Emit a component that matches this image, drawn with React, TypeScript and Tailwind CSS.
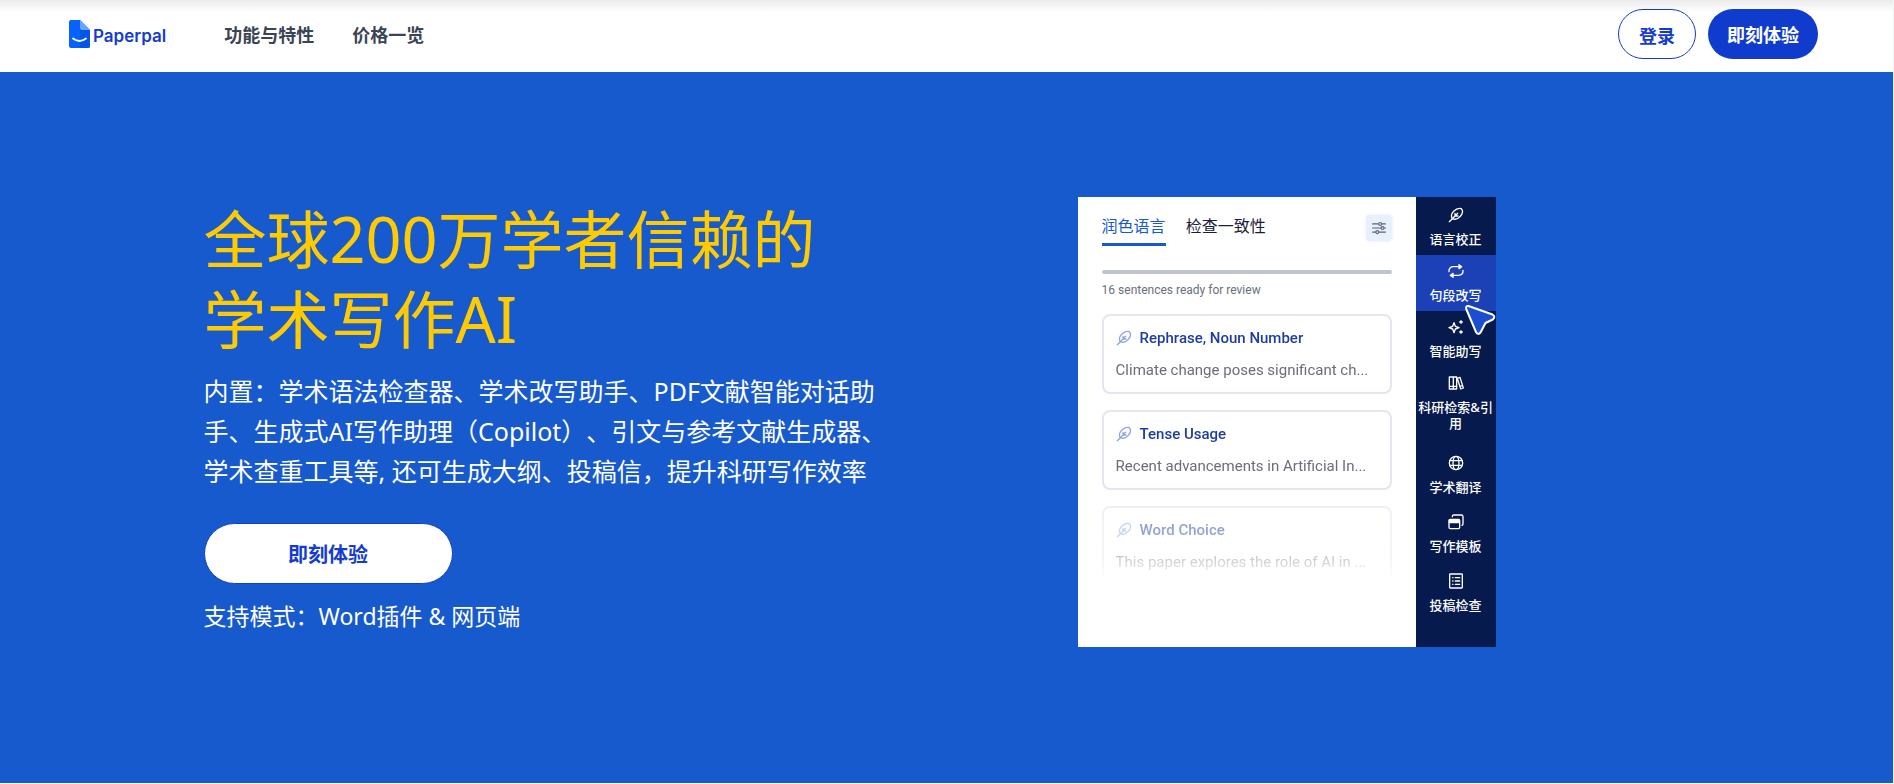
import React, { useState } from "react";

const iconProps = {
  viewBox: "0 0 24 24",
  fill: "none",
  stroke: "currentColor",
  strokeWidth: 2,
  strokeLinecap: "round" as const,
  strokeLinejoin: "round" as const,
  "aria-hidden": true,
};

const FeatherIcon = ({ className = "w-4 h-4" }: { className?: string }) => (
  <svg {...iconProps} className={className}>
    <path d="M2 22 6.500 17.500C4 13.500 5.500 9.500 8.500 6.500 12 3 17 1.500 20 2.500 23 5 22 11 18 14.500 15 18 11 19.500 6.500 17.500Z" />
    <path d="M6.500 17.500 14.500 9.500M10.500 9.500v4H15" />
  </svg>
);

const RepeatIcon = () => (
  <svg {...iconProps} className="w-4 h-4">
    <path d="M1.500 13C1 8 4 5.500 8 5.500h9" />
    <path d="M16.500 2.500 20.500 5.500 16.500 8.500Z" fill="currentColor" />
    <path d="M22.500 11c.5 5-2.500 7.500-6.500 7.500H7" />
    <path d="M7.500 15.500 3.500 18.500l4 3Z" fill="currentColor" />
  </svg>
);

const SparkleIcon = () => (
  <svg {...iconProps} className="w-4 h-4">
    <path d="M9 5.500 11 11 16.500 13 11 15 9 20.500 7 15 1.500 13 7 11Z" />
    <path d="M19.500 2.500v4M17.500 4.500h4M19.500 17.500v4M17.500 19.500h4" />
  </svg>
);

const BooksIcon = () => (
  <svg {...iconProps} className="w-4 h-4">
    <path d="M2 3h6v18H2ZM8 3h5v18H8ZM2 17h11M14 5l4-1.500 5 16-4 1.500ZM18 17l3.500-1" />
  </svg>
);

const GlobeIcon = () => (
  <svg {...iconProps} className="w-4 h-4">
    <circle cx="12" cy="12" r="10" />
    <ellipse cx="12" cy="12" rx="4.500" ry="10" />
    <path d="M3 8.500h18M3 15.500h18" />
  </svg>
);

const TemplateIcon = () => (
  <svg {...iconProps} className="w-4 h-4">
    <rect x="1.500" y="8" width="16" height="14" rx="2" />
    <path d="M2 9h15v4H2Z" fill="currentColor" />
    <path d="M6.500 4V3.500a2 2 0 0 1 2-2H20a2.500 2.500 0 0 1 2.500 2.500v11a2 2 0 0 1-1.500 2" />
  </svg>
);

const ChecklistIcon = () => (
  <svg {...iconProps} className="w-4 h-4">
    <rect x="2.500" y="1.500" width="19" height="21" rx="1" />
    <path d="M7 7h.5M11 7h6.500M7 12h.5M11 12h6.500M7 17h.5M11 17h6.500" />
  </svg>
);

const SlidersIcon = () => (
  <svg {...iconProps} className="w-3.5 h-3.5">
    <path d="M1 5h10M17 5h6M1 12h14M21 12h2M1 19h5M12 19h11" />
    <circle cx="14" cy="5" r="2.500" />
    <circle cx="18" cy="12" r="2.500" />
    <circle cx="9" cy="19" r="2.500" />
  </svg>
);

const Logo = () => (
  <a href="#" className="flex items-center gap-[3px] text-[#143ccf]">
    <svg viewBox="0 0 21 28" className="w-[21px] h-7" aria-hidden="true">
      <path d="M2 0h9l10 10v16a2 2 0 0 1-2 2H2a2 2 0 0 1-2-2V2a2 2 0 0 1 2-2Z" fill="#0562fb" />
      <path d="M11 10h10v16a2 2 0 0 1-2 2h-8Z" fill="#0456e6" />
      <path d="M11 0 21 10H13a2 2 0 0 1-2-2Z" fill="#6aa3ff" />
      <path d="M4 18.500q6.500 5 13 0" fill="none" stroke="#fff" strokeWidth="1.800" strokeLinecap="round" />
    </svg>
    <span className="pt-1 font-[Inter,sans-serif] font-semibold text-[17px] leading-7">Paperpal</span>
  </a>
);

const tools = [
  { label: "语言校正", icon: <FeatherIcon /> },
  { label: "句段改写", icon: <RepeatIcon /> },
  { label: "智能助写", icon: <SparkleIcon /> },
  { label: "科研检索&引用", icon: <BooksIcon /> },
];

const moreTools = [
  { label: "学术翻译", icon: <GlobeIcon /> },
  { label: "写作模板", icon: <TemplateIcon /> },
  { label: "投稿检查", icon: <ChecklistIcon /> },
];

const suggestions = [
  { title: "Rephrase, Noun Number", text: "Climate change poses significant ch..." },
  { title: "Tense Usage", text: "Recent advancements in Artificial In..." },
  { title: "Word Choice", text: "This paper explores the role of AI in ..." },
];

function ToolButton({
  label,
  icon,
  active,
  onClick,
}: {
  label: string;
  icon: React.ReactNode;
  active: boolean;
  onClick: () => void;
}) {
  return (
    <button
      onClick={onClick}
      className={`w-full flex flex-col items-center gap-2 pt-2 pb-2 text-[13px] leading-4 font-medium text-white ${
        active ? "bg-[#1c41b6]" : ""
      }`}
    >
      {icon}
      <span>{label}</span>
    </button>
  );
}

function EditorPreview() {
  const [activeTool, setActiveTool] = useState("句段改写");
  const [activeTab, setActiveTab] = useState("润色语言");

  return (
    <div className="flex w-[418px] h-[450px] bg-white">
      <div className="flex-1 min-w-0 pl-6 pr-6 pt-4">
        {/* Tabs */}
        <div className="flex items-start gap-5">
          {["润色语言", "检查一致性"].map((tab) => (
            <button
              key={tab}
              onClick={() => setActiveTab(tab)}
              className={`pb-1 border-b-3 text-base leading-[26px] ${
                activeTab === tab
                  ? "border-[#1859cf] text-[#1859cf]"
                  : "border-transparent text-[#1c1d3a]"
              }`}
            >
              {tab}
            </button>
          ))}
          <button
            aria-label="设置"
            className="ml-auto mt-0.5 w-[26px] h-[26px] flex items-center justify-center rounded bg-[#e9effc] text-[#59637a] shadow-[0_0_4px_#e6edfc]"
          >
            <SlidersIcon />
          </button>
        </div>

        <div className="mt-6 h-1 rounded-full bg-[#bfc4d0]" />
        <p className="mt-1.5 font-[Roboto,sans-serif] text-xs leading-5 text-[#6b6f7d]">16 sentences ready for review</p>

        {/* Suggestions, the last one fades out */}
        <div className="mt-3.5 h-[268px] overflow-hidden flex flex-col gap-4 font-[Roboto,sans-serif] [mask-image:linear-gradient(to_bottom,black_66%,#0008_74%,#0006_90%,transparent_100%)]">
          {suggestions.map((item) => (
            <div key={item.title} className="shrink-0 rounded-lg border-2 border-[#e4e5f0] px-3 pt-2.5 pb-2.5">
              <div className="flex items-center gap-2 text-[15px] leading-6 font-medium text-[#1f3da0]">
                <FeatherIcon className="w-4 h-4 text-[#8ea4e0]" />
                {item.title}
              </div>
              <p className="mt-2 text-[15px] leading-6 whitespace-nowrap text-[#6b6d7a]">{item.text}</p>
            </div>
          ))}
        </div>
      </div>

      <div className="relative w-20 shrink-0 bg-[#061a4d] pt-0.5">
        {tools.map((tool) => (
          <ToolButton
            key={tool.label}
            {...tool}
            active={activeTool === tool.label}
            onClick={() => setActiveTool(tool.label)}
          />
        ))}
        <div className="mt-2 flex flex-col gap-[3px]">
          {moreTools.map((tool) => (
            <ToolButton
              key={tool.label}
              {...tool}
              active={activeTool === tool.label}
              onClick={() => setActiveTool(tool.label)}
            />
          ))}
        </div>

        {/* Cursor */}
        <svg viewBox="0 0 32 32" className="absolute right-0 top-[107px] w-8 h-8 pointer-events-none" aria-hidden="true">
          <path
            d="M4.500 2 28.500 10.500q3.500 2 .3 5L21.500 19l-5 9.500q-2.500 3-4.500-.5L2.200 5Q1.600 1.500 4.500 2Z"
            fill="#1c4fd0"
            stroke="#fff"
            strokeWidth="2"
            strokeLinejoin="round"
          />
        </svg>
      </div>
    </div>
  );
}

export default function App() {
  return (
    <div className="border-r border-gray-100 bg-white font-['Noto_Sans','Noto_Sans_CJK_SC',sans-serif]">
      <header className="h-[72px] flex items-start justify-between pt-[9px] pl-[69px] pr-[75px] bg-[linear-gradient(to_bottom,#ebebeb,white_12px)]">
        <div className="flex items-center h-[50px]">
          <Logo />
          <nav className="ml-[58px] flex gap-[38px] pt-0.5 text-lg leading-7 font-bold text-[#3a4454]">
            <a href="#">功能与特性</a>
            <a href="#">价格一览</a>
          </nav>
        </div>
        <div className="flex gap-3 text-lg leading-7 font-bold">
          <button className="w-[78px] h-[50px] pt-1 rounded-full border border-[#143ccf] bg-white text-[#143ccf]">
            登录
          </button>
          <button className="w-[110px] h-[50px] pt-0.5 rounded-full bg-[#0f3ccd] text-white">即刻体验</button>
        </div>
      </header>

      <main className="bg-[#175acd] pt-[125px] pb-[136px]">
        <div className="max-w-[1486px] mx-auto grid grid-cols-[10fr_7fr]">
          <div className="pt-0.5 text-white">
            <h1 className="text-[63px] leading-[80px] text-[#ffcb00]">
              全球200万学者信赖的
              <br />
              学术写作AI
            </h1>
            <p className="mt-3 text-[25px] leading-10 [text-spacing-trim:space-all]">
              内置：学术语法检查器、学术改写助手、PDF文献智能对话助
              <br />
              手、生成式AI写作助理（Copilot）、引文与参考文献生成器、
              <br />
              学术查重工具等, 还可生成大纲、投稿信，提升科研写作效率
            </p>
            <button className="mt-8 pt-0.5 block w-[249px] h-[61px] rounded-full border border-[#143ccf] bg-white text-xl font-bold text-[#143ccf]">
              即刻体验
            </button>
            <p className="mt-3.5 text-[23px] leading-9">支持模式：Word插件 &amp; 网页端</p>
          </div>
          <EditorPreview />
        </div>
      </main>
    </div>
  );
}
